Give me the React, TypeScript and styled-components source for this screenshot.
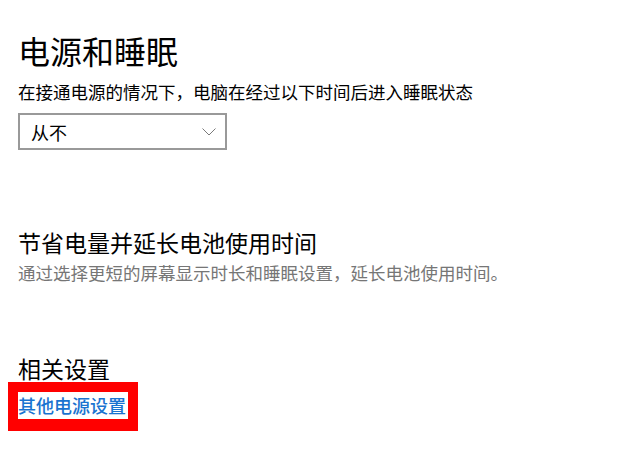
import styled, { createGlobalStyle } from 'styled-components';

const GlobalStyle = createGlobalStyle`
    body {
        margin: 0;
        background: #fff;
        font-family: "Noto Sans CJK SC", "Noto Sans", sans-serif;
    }
`;

const App = () => {
    return (
        <>
            <GlobalStyle />
            <Page>
                <PageTitle>电源和睡眠</PageTitle>
                <Label>在接通电源的情况下，电脑在经过以下时间后进入睡眠状态</Label>
                <Dropdown>
                    <DropdownText>从不</DropdownText>
                    <Chevron width="14" height="8" viewBox="0 0 14 8">
                        <path d="M0.5 0.5 L7 7 L13.5 0.5" fill="none" stroke="#7a7a7a" strokeWidth="1" />
                    </Chevron>
                </Dropdown>

                <SectionTitle $gap={77}>节省电量并延长电池使用时间</SectionTitle>
                <Desc>通过选择更短的屏幕显示时长和睡眠设置，延长电池使用时间。</Desc>

                <SectionTitle $gap={71} $lh={24}>相关设置</SectionTitle>
                <Highlight>
                    <Link href="#">其他电源设置</Link>
                </Highlight>
            </Page>
        </>
    );
};

export default App;

const Page = styled.div`
    display: flex;
    flex-direction: column;
    align-items: flex-start;
    padding: 30px 0 0 18px;
    box-sizing: border-box;
    width: 629px;
    height: 472px;
    overflow: hidden;
`;

const PageTitle = styled.h1`
    margin: 0;
    font-size: 32px;
    line-height: 40px;
    font-weight: 400;
    color: #000;
`;

const Label = styled.p`
    margin: 10px 0 0;
    font-size: 17.5px;
    line-height: 24px;
    color: #000;
`;

const Dropdown = styled.div`
    margin-top: 9px;
    width: 209px;
    height: 37px;
    box-sizing: border-box;
    border: 2px solid #999;
    display: flex;
    align-items: center;
    justify-content: space-between;
    padding: 0 9px 0 11px;
`;

const DropdownText = styled.span`
    font-size: 18px;
    line-height: 24px;
    color: #000;
`;

const Chevron = styled.svg`
    display: block;
`;

const SectionTitle = styled.h2<{ $gap: number; $lh?: number }>`
    margin: ${p => p.$gap}px 0 0;
    font-size: 23px;
    line-height: ${p => p.$lh ?? 30}px;
    font-weight: 400;
    color: #000;
`;

const Desc = styled.p`
    margin: 4px 0 0;
    font-size: 17.5px;
    line-height: 24px;
    color: #767676;
`;

const Highlight = styled.div`
    margin: 2px 0 0 -10px;
    border: 10px solid #ff0000;
    border-bottom-width: 12px;
    background: #fff;
`;

const Link = styled.a`
    display: block;
    width: 110px;
    font-size: 18px;
    line-height: 27px;
    font-weight: 500;
    color: #1a73d0;
    text-decoration: none;
    white-space: nowrap;
`;
